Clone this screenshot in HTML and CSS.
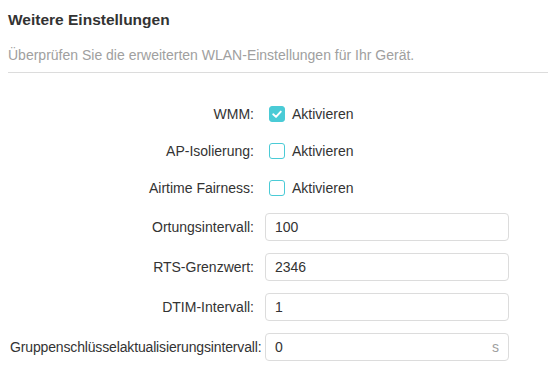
FILE: index.html
```html
<!DOCTYPE html>
<html lang="de">
<head>
<meta charset="utf-8">
<link rel="stylesheet" href="styles.css">
</head>
<body>
<div class="page">
  <h2 class="title">Weitere Einstellungen</h2>
  <p class="subtitle">Überprüfen Sie die erweiterten WLAN-Einstellungen für Ihr Gerät.</p>
  <div class="divider"></div>
  <div class="form">
    <div class="row check-row">
      <label class="label">WMM:</label>
      <div class="control">
        <span class="box checked"><svg viewBox="0 0 16 16" width="16" height="16"><path d="M4.2 8.3 L7 10.9 L11.8 5.6" fill="none" stroke="#fff" stroke-width="1.9" stroke-linecap="round" stroke-linejoin="round"/></svg></span>
        <span class="opt">Aktivieren</span>
      </div>
    </div>
    <div class="row check-row">
      <label class="label">AP-Isolierung:</label>
      <div class="control">
        <span class="box"></span>
        <span class="opt">Aktivieren</span>
      </div>
    </div>
    <div class="row check-row">
      <label class="label">Airtime Fairness:</label>
      <div class="control">
        <span class="box"></span>
        <span class="opt">Aktivieren</span>
      </div>
    </div>
    <div class="row input-row">
      <label class="label">Ortungsintervall:</label>
      <div class="field"><span class="val">100</span></div>
    </div>
    <div class="row input-row">
      <label class="label">RTS-Grenzwert:</label>
      <div class="field"><span class="val">2346</span></div>
    </div>
    <div class="row input-row">
      <label class="label">DTIM-Intervall:</label>
      <div class="field"><span class="val">1</span></div>
    </div>
    <div class="row input-row">
      <label class="label long">Gruppenschlüsselaktualisierungsintervall:</label>
      <div class="field"><span class="val">0</span><span class="unit">s</span></div>
    </div>
  </div>
</div>
</body>
</html>
```

FILE: styles.css
```css
* { box-sizing: border-box; }
html, body { margin: 0; padding: 0; background: #fff; }
body {
  font-family: "Liberation Sans", Arial, sans-serif;
  font-size: 14px;
  color: #333;
}
.page { padding-left: 8px; }
.title {
  margin: 0;
  padding-top: 10px;
  font-size: 15.5px;
  line-height: 20px;
  font-weight: bold;
  color: #333;
}
.subtitle {
  margin: 0;
  padding-top: 16px;
  line-height: 18px;
  font-size: 14px;
  color: #a0a0a0;
}
.divider {
  margin-top: 8px;
  height: 1px;
  background: #dcdcdc;
}
.form {
  padding-top: 22px;
  display: flex;
  flex-direction: column;
}
.row {
  display: flex;
  align-items: center;
}
.check-row { height: 37px; }
.input-row { height: 28px; margin-top: 12px; }
.check-row + .input-row { margin-top: 7px; }
.label {
  flex: 0 0 247px;
  min-width: 0;
  margin-left: 2px;
  padding-right: 3px;
  text-align: right;
  white-space: nowrap;
  color: #333;
}
.label.long { text-align: left; letter-spacing: -0.15px; }
.control {
  display: flex;
  align-items: center;
  margin-left: 12px;
}
.box {
  width: 16px;
  height: 16px;
  border: 1px solid #4acbd6;
  border-radius: 3px;
  display: inline-flex;
  align-items: center;
  justify-content: center;
}
.box.checked { background: #4acbd6; border-color: #4acbd6; }
.box svg { display: block; flex: none; }
.opt { margin-left: 7px; color: #333; }
.field {
  position: relative;
  margin-left: 8px;
  width: 244px;
  height: 28px;
  border: 1px solid #dcdcdc;
  border-radius: 4px;
  background: #fff;
  display: flex;
  align-items: center;
  padding: 0 9px;
}
.val { flex: 1; color: #333; }
.unit { color: #a0a0a0; }
```
